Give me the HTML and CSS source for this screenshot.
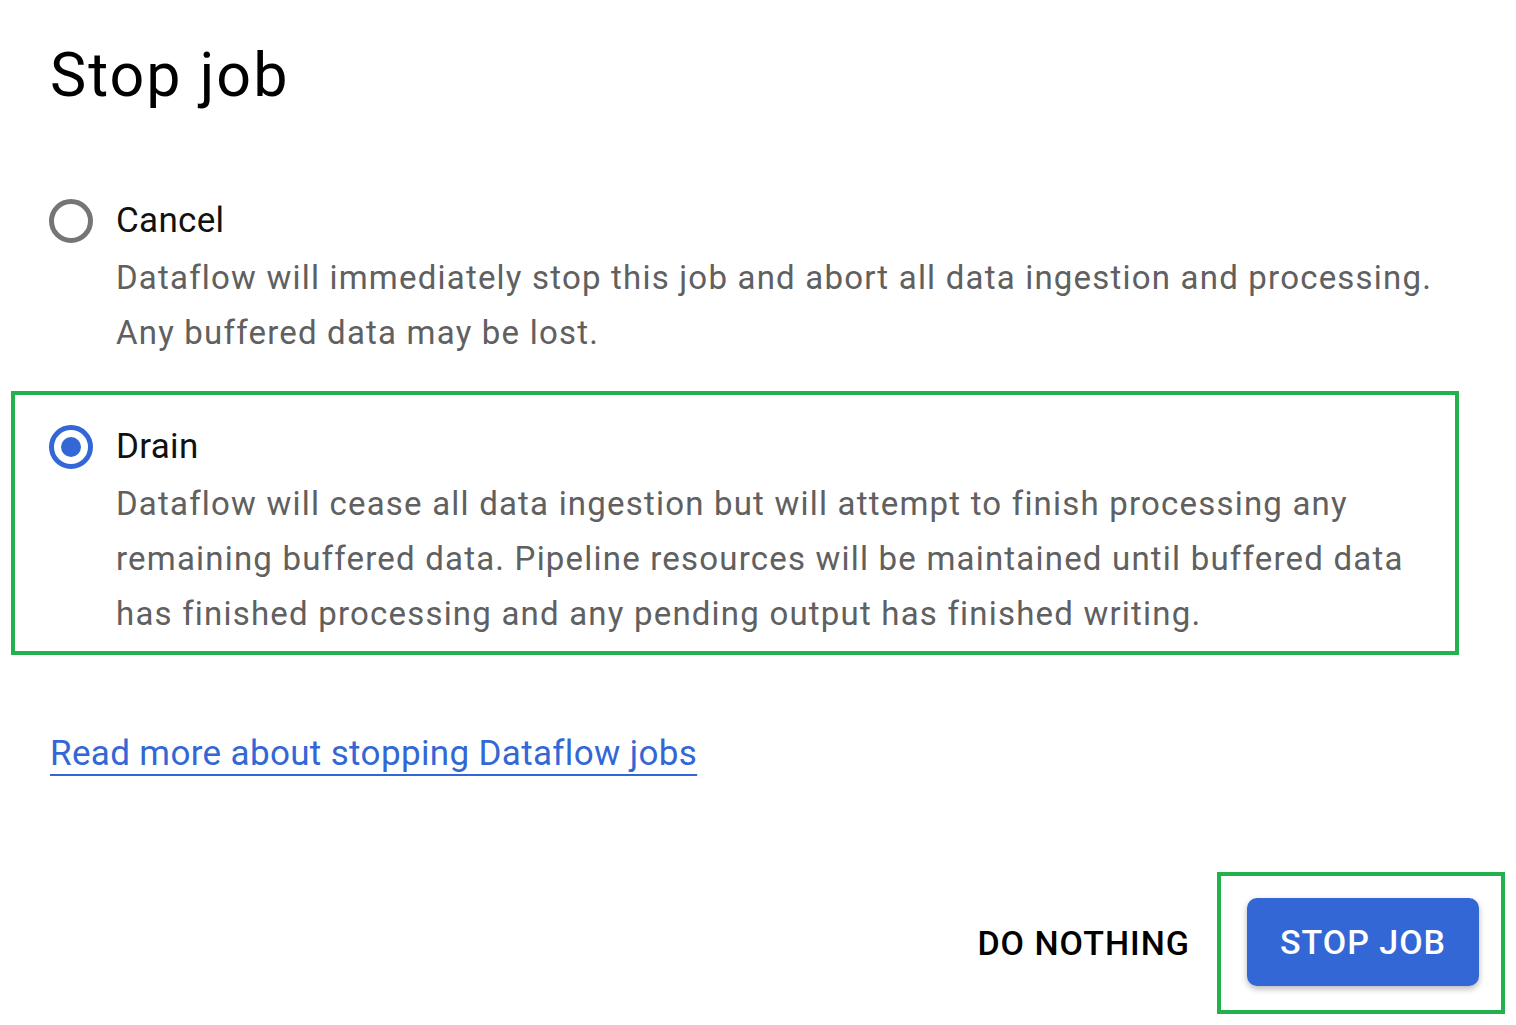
FILE: index.html
```html
<!DOCTYPE html>
<html lang="en">
<head>
<meta charset="utf-8">
<title>Stop job</title>
<link rel="stylesheet" href="styles.css">
</head>
<body>
<div class="dialog">
  <h1 class="title">Stop job</h1>
  <div class="options">
    <div class="option">
      <span class="radio"></span>
      <span class="label">Cancel</span>
      <p class="desc">Dataflow will immediately stop this job and abort all data ingestion and processing. Any buffered data may be lost.</p>
    </div>
    <div class="option highlight">
      <span class="radio checked"></span>
      <span class="label">Drain</span>
      <p class="desc">Dataflow will cease all data ingestion but will attempt to finish processing any remaining buffered data. Pipeline resources will be maintained until buffered data has finished processing and any pending output has finished writing.</p>
    </div>
  </div>
  <div class="more"><a class="more-link" href="#">Read more about stopping Dataflow jobs</a></div>
  <div class="actions">
    <button class="btn-text" type="button">DO NOTHING</button>
    <div class="btn-highlight"><button class="btn-primary" type="button">STOP JOB</button></div>
  </div>
</div>
</body>
</html>
```

FILE: styles.css
```css
* { box-sizing: border-box; }
html, body { margin: 0; padding: 0; background: #fff; }
body { font-family: Roboto, "Noto Sans", Arial, sans-serif; color: #000; }

.dialog {
  padding: 40px 11px 11px 50px;
}

.title {
  margin: 0;
  font-size: 61px;
  line-height: 70px;
  letter-spacing: 2px;
  font-weight: 400;
  color: #000;
}

.options {
  margin-top: 82px;
  display: flex;
  flex-direction: column;
}

.option {
  display: grid;
  grid-template-columns: 43px 1fr;
  column-gap: 23px;
  align-items: center;
}

.option.highlight {
  margin-top: 31px;
  margin-left: -39px;
  width: 1448px;
  border: 4px solid #22b14c;
  padding: 23px 0 10px 35px;
}

.radio {
  grid-column: 1;
  grid-row: 1;
  width: 44px;
  height: 44px;
  margin-left: -1px;
  border: 5px solid #757575;
  border-radius: 50%;
  display: flex;
  align-items: center;
  justify-content: center;
}

.radio.checked { border-color: #3367d6; }
.radio.checked::after {
  content: "";
  width: 20px;
  height: 20px;
  border-radius: 50%;
  background: #3367d6;
}

.label {
  grid-column: 2;
  grid-row: 1;
  font-size: 35px;
  line-height: 58px;
  letter-spacing: 0.3px;
  color: #111;
}

.desc {
  grid-column: 2;
  grid-row: 2;
  margin: 0;
  max-width: 1330px;
  font-size: 33px;
  line-height: 55px;
  letter-spacing: 1.2px;
  color: #606060;
}

.more {
  margin-top: 74px;
  font-size: 35px;
  line-height: 50px;
  letter-spacing: 0.35px;
}

.more-link {
  color: #3367d6;
  text-decoration: underline;
  text-decoration-thickness: 2px;
  text-underline-offset: 9px;
}

.actions {
  margin-top: 93px;
  display: flex;
  justify-content: flex-end;
  align-items: center;
}

.btn-text, .btn-primary {
  font-family: Roboto, "Noto Sans", Arial, sans-serif;
  font-size: 34px;
  font-weight: 500;
  letter-spacing: 1px;
  height: 88px;
  border: none;
  cursor: pointer;
}

.btn-text {
  background: transparent;
  color: #000;
  padding: 0 24px;
  margin-right: 3px;
}

.btn-highlight {
  border: 4px solid #22b14c;
  padding: 22px 22px 24px 26px;
}

.btn-primary {
  width: 232px;
  background: #3367d6;
  color: #fff;
  border-radius: 10px;
  box-shadow: 0 3px 6px rgba(0, 0, 0, 0.28);
  padding: 0;
}
```
